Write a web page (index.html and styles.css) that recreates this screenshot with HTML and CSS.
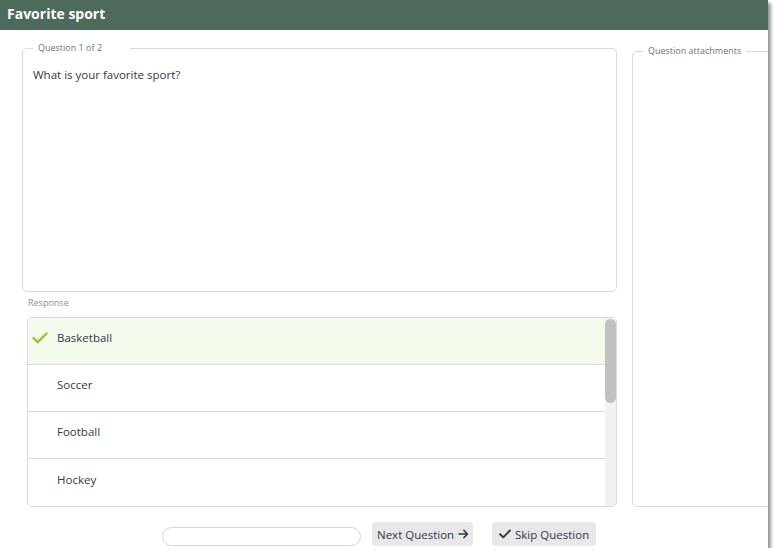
FILE: index.html
```html
<!DOCTYPE html>
<html lang="en">
<head>
    <meta charset="UTF-8">
    <title>Favorite sport</title>
    <link rel="stylesheet" href="styles.css">
</head>
<body>
    <div class="window">
        <!-- Title bar -->
        <header class="title-bar">Favorite sport</header>

        <div class="content">
            <div class="left-col">
                <fieldset class="box question-box">
                    <legend class="legend-wide">Question 1 of 2</legend>
                    <p class="question-text">What is your favorite sport?</p>
                </fieldset>

                <div class="response-label">Response</div>
                <div class="response-list">
                    <div class="options">
                        <div class="option selected">
                            <svg class="check" width="16" height="12" viewBox="0 0 16 12">
                                <path d="M1.5 6.2 L5.8 10.2 L14.5 1.5" fill="none" stroke="#8dc63f" stroke-width="2.4" stroke-linecap="round" stroke-linejoin="round"/>
                            </svg>
                            <span>Basketball</span>
                        </div>
                        <div class="option"><span>Soccer</span></div>
                        <div class="option"><span>Football</span></div>
                        <div class="option last"><span>Hockey</span></div>
                    </div>
                    <!-- scrollbar -->
                    <div class="scroll-track">
                        <div class="scroll-thumb"></div>
                    </div>
                </div>
            </div>

            <div class="right-col">
                <fieldset class="box attach-box">
                    <legend>Question attachments</legend>
                </fieldset>
            </div>
        </div>

        <!-- Bottom actions -->
        <div class="actions">
            <input type="text" class="answer-input">
            <button class="btn next-btn">Next Question
                <svg width="12" height="10" viewBox="0 0 12 10">
                    <path d="M1 5 H10.5 M6.5 1 L10.5 5 L6.5 9" fill="none" stroke="#2e3a4a" stroke-width="1.6" stroke-linecap="round" stroke-linejoin="round"/>
                </svg>
            </button>
            <button class="btn skip-btn">
                <svg width="12" height="10" viewBox="0 0 12 10">
                    <path d="M1 5.2 L4.3 8.3 L11 1.5" fill="none" stroke="#2e3a4a" stroke-width="1.9" stroke-linecap="round" stroke-linejoin="round"/>
                </svg>
                Skip Question</button>
        </div>
    </div>
</body>
</html>
```

FILE: styles.css
```css
body {
    margin: 0;
    padding: 0;
    background-color: #fff;
    font-family: "Open Sans", Arial, sans-serif;
    color: #2e3a4a;
}
.window {
    width: 768px;
    height: 548px;
    background-color: #fff;
    box-shadow: 3px 3px 3px rgba(0, 0, 0, 0.4);
    overflow: hidden;
    display: flex;
    flex-direction: column;
}
.title-bar {
    height: 30px;
    line-height: 27px;
    background-color: #4e6a5b;
    color: #fff;
    font-weight: 700;
    font-size: 14px;
    padding-left: 7px;
    flex-shrink: 0;
}
.content {
    display: flex;
    gap: 15px;
    padding: 11px 0 0 22px;
    height: 466px;
    flex-shrink: 0;
}
.left-col {
    width: 595px;
    flex-shrink: 0;
    display: flex;
    flex-direction: column;
}
.right-col {
    flex: 1;
    display: flex;
    padding-top: 3px;
}
.box {
    margin: 0;
    border: 1px solid #dadada;
    border-radius: 5px;
    padding: 0 10px;
    min-width: 0;
}
.box legend {
    font-size: 9px;
    color: #6b7380;
    padding: 0 5px;
    line-height: 14px;
}
.box legend.legend-wide {
    padding-right: 28px;
}
.question-box {
    flex: 1;
}
.attach-box {
    flex: 1;
    margin-right: -20px;
}
.question-text {
    margin: 12px 0 0 0;
    font-size: 11.5px;
}
.response-label {
    height: 25px;
    line-height: 22px;
    font-size: 9px;
    color: #8a9199;
    padding-left: 6px;
    flex-shrink: 0;
}
.response-list {
    margin-left: 5px;
    height: 188px;
    border: 1px solid #dadada;
    border-radius: 5px;
    overflow: hidden;
    display: flex;
    flex-shrink: 0;
}
.options {
    flex: 1;
}
.scroll-track {
    width: 11px;
    background-color: #f1f1f1;
    padding-top: 1px;
}
.scroll-thumb {
    height: 84px;
    background-color: #c1c1c1;
    border-radius: 6px;
}
.option {
    height: 47px;
    display: flex;
    align-items: center;
    padding: 0 0 7px 29px;
    font-size: 11.5px;
    border-bottom: 1px solid #dadada;
    box-sizing: border-box;
    position: relative;
}
.option.last {
    border-bottom: none;
}
.option.selected {
    background-color: #f4faec;
}
.check {
    position: absolute;
    left: 4px;
    top: 14px;
}
.actions {
    display: flex;
    justify-content: center;
    align-items: flex-end;
    padding: 15px 10px 0 0;
}
.answer-input {
    width: 199px;
    height: 19px;
    box-sizing: border-box;
    border: 1px solid #d6d6d6;
    border-radius: 10px;
    margin-right: 11px;
    outline: none;
}
.btn {
    height: 24px;
    border: none;
    border-radius: 4px;
    background-color: #e8e8e8;
    color: #2e3a4a;
    font-family: "Open Sans", Arial, sans-serif;
    font-size: 11.5px;
    padding: 0 4px 0 5px;
    display: flex;
    align-items: center;
    gap: 4px;
    white-space: nowrap;
}
.next-btn {
    width: 101px;
    margin-right: 19px;
    justify-content: space-between;
}
.skip-btn {
    width: 104px;
    padding-left: 7px;
}
```
